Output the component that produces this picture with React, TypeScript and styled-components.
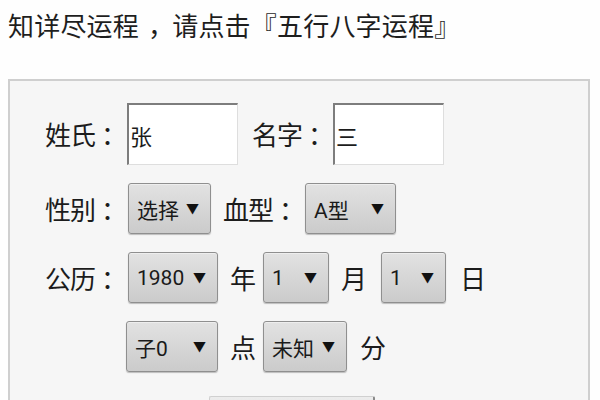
import React from "react";
import styled, { createGlobalStyle } from "styled-components";

const Global = createGlobalStyle`
  html, body { margin: 0; padding: 0; background: #fefefe; }
  body { font-family: "Noto Sans CJK SC", "Noto Sans", sans-serif; color: #1c1c1c; }
  * { box-sizing: border-box; }
`;

const Page = styled.div`
  width: 600px;
  height: 400px;
  overflow: hidden;
  padding: 0 0 0 8px;
`;

const Title = styled.div`
  font-size: 26px;
  line-height: 26px;
  letter-spacing: 0.2px;
  height: 79px;
  padding-top: 12px;
  white-space: nowrap;
  color: #1e1e1e;
`;

const Comma = styled.span`
  font-feature-settings: "halt" 1;
  margin: 0 11px 0 9px;
`;

const FormBox = styled.div`
  width: 582px;
  border: 2px solid #cfcfcf;
  background: #f6f6f6;
  padding: 22px 0 0 35px;
  display: flex;
  flex-direction: column;
  gap: 18px;
  height: 340px;
`;

const Row = styled.div<{ $h: number }>`
  display: flex;
  align-items: center;
  height: ${(p) => p.$h}px;
`;

const Label = styled.span<{ $w?: number; $ml?: number }>`
  font-size: 26px;
  letter-spacing: -1px;
  line-height: 1;
  white-space: nowrap;
  width: ${(p) => (p.$w ? `${p.$w}px` : "auto")};
  margin-left: ${(p) => p.$ml ?? 0}px;
  flex: none;
`;

const Colon = styled.span`
  margin-left: 6px;
`;

const Unit = styled.span<{ $l: number; $r: number }>`
  font-size: 26px;
  line-height: 1;
  margin: 0 ${(p) => p.$r}px 0 ${(p) => p.$l}px;
  flex: none;
`;

const TextInput = styled.div`
  width: 111px;
  height: 62px;
  background: #ffffff;
  border-top: 2px solid #7d7d7d;
  border-left: 2px solid #7d7d7d;
  border-right: 1px solid #dedede;
  border-bottom: 1px solid #dedede;
  font-size: 22px;
  display: flex;
  align-items: center;
  padding-left: 1px;
  flex: none;
`;

const Select = styled.div<{ $w: number }>`
  width: ${(p) => p.$w}px;
  height: 51px;
  flex: none;
  display: flex;
  align-items: center;
  justify-content: space-between;
  padding: 0 11px 0 8px;
  border: 1px solid #8f8f8f;
  border-radius: 3px;
  background: linear-gradient(#e2e2e2, #cbcbcb);
  box-shadow: inset 0 1px 0 #eeeeee, 0 1px 1px #bdbdbd;
  font-family: Roboto, "Noto Sans CJK SC", sans-serif;
  font-size: 21px;
  color: #1a1a1a;
`;

const Arrow = styled.span`
  font-size: 13px;
  color: #111;
  line-height: 1;
`;

const ButtonRow = styled.div`
  display: flex;
  padding-left: 164px;
  margin-top: 6px;
`;

const SubmitButton = styled.div`
  width: 166px;
  height: 44px;
  background: linear-gradient(#ececec, #d6d6d6);
  border: 1px solid #d0d0d0;
  border-right: 2px solid #8a8a8a;
  border-radius: 2px;
`;

function Sel({ w, text }: { w: number; text: string }) {
  return (
    <Select $w={w}>
      <span>{text}</span>
      <Arrow>▼</Arrow>
    </Select>
  );
}

function FieldLabel({ text, w, ml }: { text: string; w: number; ml?: number }) {
  return (
    <Label $w={w} $ml={ml}>
      {text}
      {text && <Colon>：</Colon>}
    </Label>
  );
}

export default function App() {
  return (
    <Page>
      <Global />
      <Title>
        知详尽运程<Comma>，</Comma>请点击『五行八字运程』
      </Title>
      <FormBox>
        <Row $h={62}>
          <FieldLabel w={82} text="姓氏" />
          <TextInput>张</TextInput>
          <FieldLabel w={81} ml={14} text="名字" />
          <TextInput>三</TextInput>
        </Row>
        <Row $h={51}>
          <FieldLabel w={83} text="性别" />
          <Sel w={83} text="选择" />
          <FieldLabel w={82} ml={12} text="血型" />
          <Sel w={91} text="A型" />
        </Row>
        <Row $h={51}>
          <FieldLabel w={83} text="公历" />
          <Sel w={90} text="1980" />
          <Unit $l={12} $r={7}>年</Unit>
          <Sel w={66} text="1" />
          <Unit $l={12} $r={14}>月</Unit>
          <Sel w={65} text="1" />
          <Unit $l={14} $r={0}>日</Unit>
        </Row>
        <Row $h={51}>
          <FieldLabel w={81} text="" />
          <Sel w={92} text="子0" />
          <Unit $l={12} $r={7}>点</Unit>
          <Sel w={84} text="未知" />
          <Unit $l={13} $r={0}>分</Unit>
        </Row>
        <ButtonRow>
          <SubmitButton />
        </ButtonRow>
      </FormBox>
    </Page>
  );
}
